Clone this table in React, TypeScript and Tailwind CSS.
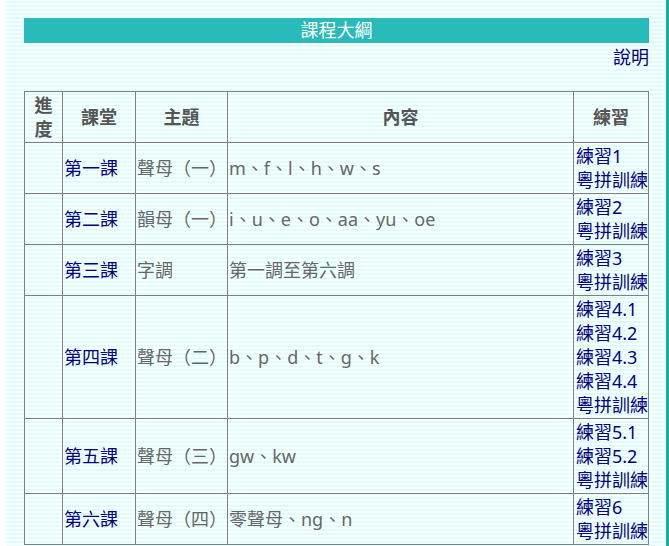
const font = { fontFamily: '"Noto Sans", "Noto Sans CJK TC", sans-serif' };

type Lesson = {
  name: string;
  topic: string;
  content: string;
  drills: string[];
};

const lessons: Lesson[] = [
  { name: "第一課", topic: "聲母（一）", content: "m、f、l、h、w、s", drills: ["練習1"] },
  { name: "第二課", topic: "韻母（一）", content: "i、u、e、o、aa、yu、oe", drills: ["練習2"] },
  { name: "第三課", topic: "字調", content: "第一調至第六調", drills: ["練習3"] },
  {
    name: "第四課",
    topic: "聲母（二）",
    content: "b、p、d、t、g、k",
    drills: ["練習4.1", "練習4.2", "練習4.3", "練習4.4"],
  },
  { name: "第五課", topic: "聲母（三）", content: "gw、kw", drills: ["練習5.1", "練習5.2"] },
  { name: "第六課", topic: "聲母（四）", content: "零聲母、ng、n", drills: ["練習6"] },
];

const cell = "border border-[#808080] px-[1px] py-[1px] align-middle";

export default function App() {
  return (
    <div
      className="flex min-h-screen bg-white pl-[7px] text-[18px] leading-[24px]"
      style={font}
    >
      <div className="flex-1 bg-[repeating-linear-gradient(to_bottom,#ffffff_0px,#ffffff_1px,#dcffff_1px,#dcffff_3px,#ffffff_3px,#ffffff_4px)] px-[17px] pt-[18px] pb-6">
        <div className="h-[25px] bg-[#29baba] text-center text-white leading-[25px]">
          課程大綱
        </div>
        <div className="mt-[2px] text-right">
          <a href="#" className="text-[#000080]">
            說明
          </a>
        </div>

        <table className="mt-[22px] w-full table-fixed border-collapse">
          <colgroup>
            <col className="w-[38px]" />
            <col className="w-[73px]" />
            <col className="w-[92px]" />
            <col />
            <col className="w-[75px]" />
          </colgroup>
          <thead>
            <tr className="font-bold text-[#555555]">
              <th className={`${cell} text-center`}>進度</th>
              <th className={`${cell} text-center`}>課堂</th>
              <th className={`${cell} text-center`}>主題</th>
              <th className={`${cell} text-center`}>內容</th>
              <th className={`${cell} text-center`}>練習</th>
            </tr>
          </thead>
          <tbody>
            {lessons.map((l) => (
              <tr key={l.name}>
                <td className={cell}></td>
                <td className={cell}>
                  <a href="#" className="text-[#000080]">
                    {l.name}
                  </a>
                </td>
                <td className={`${cell} whitespace-nowrap text-[#666666]`}>{l.topic}</td>
                <td className={`${cell} text-[#666666]`}>{l.content}</td>
                <td className={`${cell} pl-[2px] whitespace-nowrap`}>
                  {l.drills.map((d) => (
                    <a key={d} href="#" className="block text-[#000080]">
                      {d}
                    </a>
                  ))}
                  <a href="#" className="block text-[#000080]">
                    粵拼訓練
                  </a>
                </td>
              </tr>
            ))}
          </tbody>
        </table>
      </div>
      <div className="w-[3px] bg-[#1fa8a8]" />
    </div>
  );
}
